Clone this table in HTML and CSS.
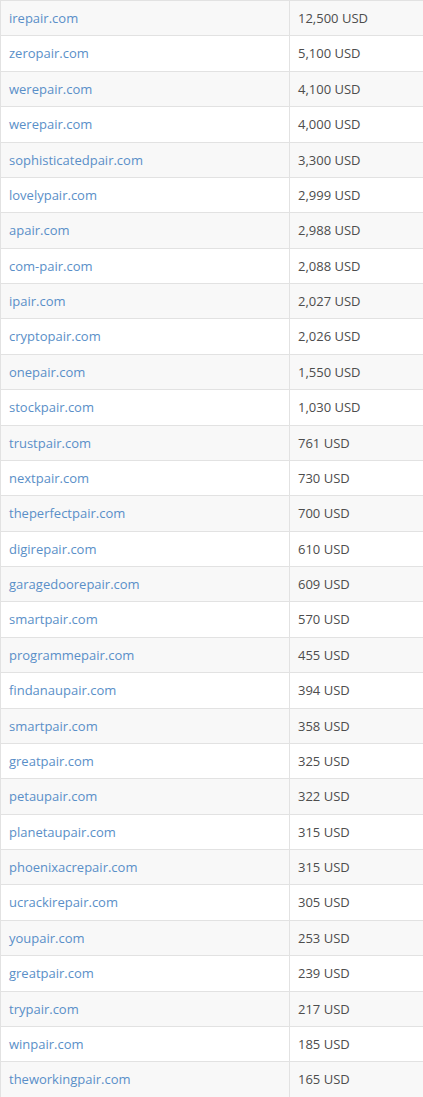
FILE: index.html
```html
<!DOCTYPE html>
<html>
<head>
<meta charset="utf-8">
<link rel="stylesheet" href="styles.css">
</head>
<body>
<table class="sales">
<tbody>
<tr><td class="domain"><a href="#">irepair.com</a></td><td class="price">12,500 USD</td></tr>
<tr><td class="domain"><a href="#">zeropair.com</a></td><td class="price">5,100 USD</td></tr>
<tr><td class="domain"><a href="#">werepair.com</a></td><td class="price">4,100 USD</td></tr>
<tr><td class="domain"><a href="#">werepair.com</a></td><td class="price">4,000 USD</td></tr>
<tr><td class="domain"><a href="#">sophisticatedpair.com</a></td><td class="price">3,300 USD</td></tr>
<tr><td class="domain"><a href="#">lovelypair.com</a></td><td class="price">2,999 USD</td></tr>
<tr><td class="domain"><a href="#">apair.com</a></td><td class="price">2,988 USD</td></tr>
<tr><td class="domain"><a href="#">com-pair.com</a></td><td class="price">2,088 USD</td></tr>
<tr><td class="domain"><a href="#">ipair.com</a></td><td class="price">2,027 USD</td></tr>
<tr><td class="domain"><a href="#">cryptopair.com</a></td><td class="price">2,026 USD</td></tr>
<tr><td class="domain"><a href="#">onepair.com</a></td><td class="price">1,550 USD</td></tr>
<tr><td class="domain"><a href="#">stockpair.com</a></td><td class="price">1,030 USD</td></tr>
<tr><td class="domain"><a href="#">trustpair.com</a></td><td class="price">761 USD</td></tr>
<tr><td class="domain"><a href="#">nextpair.com</a></td><td class="price">730 USD</td></tr>
<tr><td class="domain"><a href="#">theperfectpair.com</a></td><td class="price">700 USD</td></tr>
<tr><td class="domain"><a href="#">digirepair.com</a></td><td class="price">610 USD</td></tr>
<tr><td class="domain"><a href="#">garagedoorepair.com</a></td><td class="price">609 USD</td></tr>
<tr><td class="domain"><a href="#">smartpair.com</a></td><td class="price">570 USD</td></tr>
<tr><td class="domain"><a href="#">programmepair.com</a></td><td class="price">455 USD</td></tr>
<tr><td class="domain"><a href="#">findanaupair.com</a></td><td class="price">394 USD</td></tr>
<tr><td class="domain"><a href="#">smartpair.com</a></td><td class="price">358 USD</td></tr>
<tr><td class="domain"><a href="#">greatpair.com</a></td><td class="price">325 USD</td></tr>
<tr><td class="domain"><a href="#">petaupair.com</a></td><td class="price">322 USD</td></tr>
<tr><td class="domain"><a href="#">planetaupair.com</a></td><td class="price">315 USD</td></tr>
<tr><td class="domain"><a href="#">phoenixacrepair.com</a></td><td class="price">315 USD</td></tr>
<tr><td class="domain"><a href="#">ucrackirepair.com</a></td><td class="price">305 USD</td></tr>
<tr><td class="domain"><a href="#">youpair.com</a></td><td class="price">253 USD</td></tr>
<tr><td class="domain"><a href="#">greatpair.com</a></td><td class="price">239 USD</td></tr>
<tr><td class="domain"><a href="#">trypair.com</a></td><td class="price">217 USD</td></tr>
<tr><td class="domain"><a href="#">winpair.com</a></td><td class="price">185 USD</td></tr>
<tr><td class="domain"><a href="#">theworkingpair.com</a></td><td class="price">165 USD</td></tr>
</tbody>
</table>
</body>
</html>
```

FILE: styles.css
```css
html, body {
  margin: 0;
  padding: 0;
  background: #ffffff;
}
body {
  font-family: "Open Sans", "Liberation Sans", sans-serif;
  font-size: 13px;
  color: #4d4d4d;
}
.sales {
  border-collapse: collapse;
  width: 100%;
  table-layout: fixed;
}
.sales tr:nth-child(odd) td {
  background: #f8f8f8;
}
.sales td {
  border: 1px solid #e2e2e2;
  padding: 8px 8px;
  line-height: 18.37px;
  height: 18.37px;
  vertical-align: middle;
  white-space: nowrap;
}
.sales td.domain {
  width: 272px;
}
.sales td.price {
  border-right: none;
}
.sales a {
  color: #5a8fc8;
  text-decoration: none;
}
```
